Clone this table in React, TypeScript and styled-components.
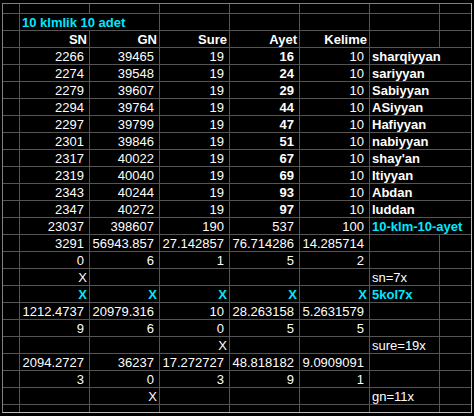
import React from "react";
import styled, { createGlobalStyle } from "styled-components";

const GlobalStyle = createGlobalStyle`
  html, body { margin: 0; padding: 0; background: #000; }
  body { font-family: "Liberation Sans", Arial, sans-serif; }
`;

const Frame = styled.div`
  margin: 3px 0 0 2px;
  width: max-content;
  border-style: solid;
  border-width: 1px;
  border-color: #808080 #c0c0c0 #c0c0c0 #808080;
`;

const Sheet = styled.div`
  display: grid;
  grid-template-columns: 16px repeat(6, 69px) 31px;
  grid-template-rows: 9px repeat(23, 16px) 7px;
  gap: 1px;
  background: #555;
`;

type Tone = "plain" | "bold" | "cyan";
type Align = "left" | "right";

const Cell = styled.div<{ $align: Align; $tone: Tone; $span: number; $num: boolean }>`
  box-sizing: border-box;
  grid-column: span ${(p) => p.$span};
  background: #000;
  color: ${(p) => (p.$tone === "cyan" ? "#00e8ff" : "#fff")};
  font-weight: ${(p) => (p.$tone === "plain" ? 400 : 700)};
  font-size: 13px;
  line-height: 16px;
  padding: 1px ${(p) => (p.$num ? 5 : 2)}px 0 2px;
  text-align: ${(p) => p.$align};
  white-space: nowrap;
  overflow: hidden;
`;

const RowHead = styled.div`
  background: #000;
`;

type C = { t: string; tone?: Tone; align?: Align; num?: boolean; span?: number } | null;

const n = (t: string): C => ({ t, num: true, align: "right" });
const nb = (t: string): C => ({ t, num: true, align: "right", tone: "bold" });
const h = (t: string): C => ({ t, align: "right", tone: "bold" });
const x: C = { t: "X", align: "right" };
const xc: C = { t: "X", align: "right", tone: "cyan" };
const name = (t: string): C => ({ t, align: "left", tone: "bold", span: 2 });
const lbl = (t: string, tone: Tone = "plain"): C => ({ t, align: "left", tone });

const data: [string, string, string, string, string, string][] = [
  ["2266", "39465", "19", "16", "10", "sharqiyyan"],
  ["2274", "39548", "19", "24", "10", "sariyyan"],
  ["2279", "39607", "19", "29", "10", "Sabiyyan"],
  ["2294", "39764", "19", "44", "10", "ASiyyan"],
  ["2297", "39799", "19", "47", "10", "Hafiyyan"],
  ["2301", "39846", "19", "51", "10", "nabiyyan"],
  ["2317", "40022", "19", "67", "10", "shay'an"],
  ["2319", "40040", "19", "69", "10", "Itiyyan"],
  ["2343", "40244", "19", "93", "10", "Abdan"],
  ["2347", "40272", "19", "97", "10", "luddan"],
];

const nums = (...v: string[]): C[] => [...v.map(n), null, null];

const rows: C[][] = [
  [null, null, null, null, null, null, null],
  [{ t: "10 klmlik 10 adet", tone: "cyan", align: "left", span: 2 }, null, null, null, null, null],
  [h("SN"), h("GN"), h("Sure"), h("Ayet"), h("Kelime"), null, null],
  ...data.map((d) => [n(d[0]), n(d[1]), n(d[2]), nb(d[3]), n(d[4]), name(d[5])]),
  [n("23037"), n("398607"), n("190"), n("537"), n("100"), { t: "10-klm-10-ayet", tone: "cyan", align: "left", span: 2 }],
  nums("3291", "56943.857", "27.142857", "76.714286", "14.285714"),
  nums("0", "6", "1", "5", "2"),
  [x, null, null, null, null, lbl("sn=7x"), null],
  [xc, xc, xc, xc, xc, lbl("5kol7x", "cyan"), null],
  nums("1212.4737", "20979.316", "10", "28.263158", "5.2631579"),
  nums("9", "6", "0", "5", "5"),
  [null, null, x, null, null, lbl("sure=19x"), null],
  nums("2094.2727", "36237", "17.272727", "48.818182", "9.0909091"),
  nums("3", "0", "3", "9", "1"),
  [null, x, null, null, null, lbl("gn=11x"), null],
  [null, null, null, null, null, null, null],
];

export default function App() {
  return (
    <>
      <GlobalStyle />
      <Frame>
        <Sheet>
          {rows.map((row, ri) => (
            <React.Fragment key={ri}>
              <RowHead />
              {row.map((c, ci) => (
                <Cell
                  key={ci}
                  $align={c?.align ?? "left"}
                  $tone={c?.tone ?? "plain"}
                  $span={c?.span ?? 1}
                  $num={!!c?.num}
                >
                  {c?.t ?? ""}
                </Cell>
              ))}
            </React.Fragment>
          ))}
        </Sheet>
      </Frame>
    </>
  );
}
